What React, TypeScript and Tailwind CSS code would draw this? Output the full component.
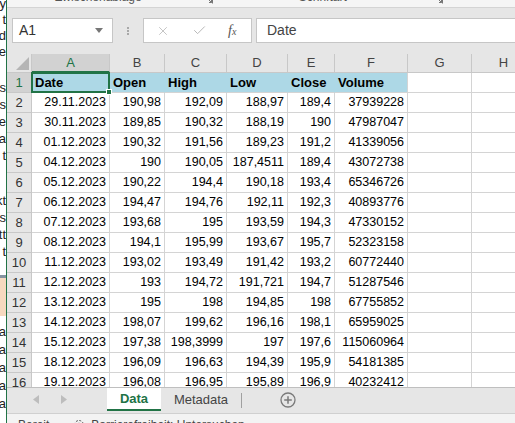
import { X, Check } from "lucide-react";

// Column letters and widths (incl. right gridline)
const COLS = [
  { key: "A", w: "w-[78px]" },
  { key: "B", w: "w-[55px]" },
  { key: "C", w: "w-[62px]" },
  { key: "D", w: "w-[61px]" },
  { key: "E", w: "w-[47px]" },
  { key: "F", w: "w-[73px]" },
  { key: "G", w: "w-[64px]" },
  { key: "H", w: "w-[64px]" },
];

const HEAD = ["Date", "Open", "High", "Low", "Close", "Volume"];

const ROWS = [
  ["29.11.2023", "190,98", "192,09", "188,97", "189,4", "37939228"],
  ["30.11.2023", "189,85", "190,32", "188,19", "190", "47987047"],
  ["01.12.2023", "190,32", "191,56", "189,23", "191,2", "41339056"],
  ["04.12.2023", "190", "190,05", "187,4511", "189,4", "43072738"],
  ["05.12.2023", "190,22", "194,4", "190,18", "193,4", "65346726"],
  ["06.12.2023", "194,47", "194,76", "192,11", "192,3", "40893776"],
  ["07.12.2023", "193,68", "195", "193,59", "194,3", "47330152"],
  ["08.12.2023", "194,1", "195,99", "193,67", "195,7", "52323158"],
  ["11.12.2023", "193,02", "193,49", "191,42", "193,2", "60772440"],
  ["12.12.2023", "193", "194,72", "191,721", "194,7", "51287546"],
  ["13.12.2023", "195", "198", "194,85", "198", "67755852"],
  ["14.12.2023", "198,07", "199,62", "196,16", "198,1", "65959025"],
  ["15.12.2023", "197,38", "198,3999", "197", "197,6", "115060964"],
  ["18.12.2023", "196,09", "196,63", "194,39", "195,9", "54181385"],
  ["19.12.2023", "196,08", "196,95", "195,89", "196,9", "40232412"],
];

// Fragments of the window behind, cut at the screen edge
const STRIP_A = ["y", "t", "d", "e"];
const STRIP_B = ["rs", "ls", "e", "a", "t"];
const STRIP_C = ["kt", "s", "tt", "t"];
const STRIP_D = ["a", "a", "a", "a", "a"];

function StripLine({ text, h }: { text: string; h: string }) {
  return (
    <div className={`flex ${h} items-center justify-end whitespace-nowrap`}>
      {text}
    </div>
  );
}

function LeftStrip() {
  return (
    <div className="flex h-full w-[6px] shrink-0 flex-col overflow-hidden bg-white text-[13px] text-[#222]">
      <div className="mt-[-4px]">
        {STRIP_A.map((t, i) => (
          <StripLine key={i} text={t} h="h-[16px]" />
        ))}
      </div>
      <div className="mt-[19px]">
        {STRIP_B.map((t, i) => (
          <StripLine key={i} text={t} h="h-[17px]" />
        ))}
      </div>
      <div className="mt-[28px]">
        {STRIP_C.map((t, i) => (
          <StripLine key={i} text={t} h="h-[17px]" />
        ))}
      </div>
      <div className="mt-[15px] h-[3px] shrink-0 bg-[#8593a0]" />
      <div className="h-[38px] shrink-0 bg-[#f6d9bf]" />
      <div className="mt-[7px]">
        {STRIP_D.map((t, i) => (
          <StripLine key={i} text={t} h="h-[18px]" />
        ))}
      </div>
    </div>
  );
}

function Launcher() {
  return (
    <svg width="8" height="8" viewBox="0 0 8 8" className="shrink-0">
      <path d="M0.5 0.5 H7.5 V7.5" fill="none" stroke="#777" strokeWidth="1" />
      <path d="M2 2 L6.5 6.5 M4 6.5 H6.5 V4" fill="none" stroke="#777" strokeWidth="1" />
    </svg>
  );
}

function RibbonStrip() {
  return (
    <div className="flex h-[8px] shrink-0 items-end overflow-hidden border-b border-[#d4d4d4] bg-[#f5f5f5] text-[12px] leading-[14px] text-[#555]">
      <div className="mb-[3px] ml-[48px] flex items-center whitespace-nowrap">Zwischenablage</div>
      <div className="mb-[3px] ml-[63px]">
        <Launcher />
      </div>
      <div className="mb-[3px] ml-[86px] whitespace-nowrap">Schriftart</div>
      <div className="mb-[3px] ml-[88px]">
        <Launcher />
      </div>
    </div>
  );
}

function FormulaBar() {
  return (
    <div className="flex h-[46px] shrink-0 items-start bg-[#e6e6e6] pt-[10px]">
      {/* Name box */}
      <div className="ml-[5px] flex h-[25px] w-[101px] shrink-0 items-center justify-between border border-[#c6c6c6] bg-white pl-[6px] pr-[9px] text-[14px] text-[#333]">
        <span>A1</span>
        <svg width="8" height="5" viewBox="0 0 8 5">
          <path d="M0 0 H8 L4 5 Z" fill="#777" />
        </svg>
      </div>
      {/* Grip dots */}
      <div className="ml-[14px] flex h-[25px] w-[2px] flex-col items-center justify-center gap-[1px]">
        <div className="h-[2px] w-[2px] bg-[#a8a8a8]" />
        <div className="h-[2px] w-[2px] bg-[#a8a8a8]" />
        <div className="h-[2px] w-[2px] bg-[#a8a8a8]" />
      </div>
      {/* Cancel / enter / fx */}
      <div className="ml-[14px] flex h-[25px] w-[109px] shrink-0 items-center border border-[#c6c6c6] bg-white">
        <X className="ml-[12px] h-[14px] w-[14px] text-[#b8b8b8]" strokeWidth={1.4} />
        <Check className="ml-[22px] h-[15px] w-[15px] text-[#b8b8b8]" strokeWidth={1.6} />
        <span
          className="ml-[21px] text-[14px] italic text-[#555]"
          style={{ fontFamily: '"Liberation Serif", serif' }}
        >
          f<span className="text-[10px]">x</span>
        </span>
      </div>
      {/* Formula input */}
      <div className="ml-[4px] flex h-[25px] w-[300px] shrink-0 items-center border border-[#c6c6c6] bg-white pl-[10px] text-[14px] text-[#444]">
        Date
      </div>
    </div>
  );
}

function HeaderRow() {
  return (
    <div className="flex h-[19px] shrink-0">
      <div className="flex h-full w-[25px] shrink-0 items-end justify-end border-r border-b border-[#c8c8c8] bg-[#e6e6e6] pb-[2px] pr-[2px]">
        <svg width="13" height="13" viewBox="0 0 13 13">
          <path d="M13 0 V13 H0 Z" fill="#b5b5b5" />
        </svg>
      </div>
      {COLS.map((c) => {
        const sel = c.key === "A";
        return (
          <div
            key={c.key}
            className={`flex h-full ${c.w} shrink-0 items-center justify-center border-r text-[13px] ${
              sel
                ? "border-b-2 border-r-[#c8c8c8] border-b-[#217346] bg-[#d2d2d2] text-[#217346]"
                : "border-b border-[#c8c8c8] bg-[#e6e6e6] text-[#444]"
            }`}
          >
            {c.key}
          </div>
        );
      })}
    </div>
  );
}

function RowHeader({ n }: { n: number }) {
  const sel = n === 1;
  return (
    <div
      className={`flex h-full w-[25px] shrink-0 items-center justify-center border-b border-r text-[13px] ${
        sel
          ? "border-b-[#c8c8c8] border-r-[#217346] bg-[#d2d2d2] text-[#217346]"
          : "border-[#c8c8c8] bg-[#e6e6e6] text-[#333]"
      }`}
    >
      {n}
    </div>
  );
}

function TitleRow() {
  return (
    <div className="flex h-[20px] shrink-0">
      <RowHeader n={1} />
      {COLS.map((c, i) => {
        if (i >= HEAD.length) {
          return (
            <div key={c.key} className={`h-full ${c.w} shrink-0 border-r border-b border-[#d4d4d4] bg-white`} />
          );
        }
        const last = i === HEAD.length - 1;
        return (
          <div
            key={c.key}
            className={`relative flex h-full ${c.w} shrink-0 items-center border-b border-r border-b-[#d4d4d4] bg-[#add8e6] pl-[3px] text-[13px] font-bold text-black ${
              last ? "border-r-[#d4d4d4]" : "border-r-[#add8e6]"
            }`}
          >
            {HEAD[i]}
            {i === 0 && (
              <div className="absolute -bottom-px -left-px -right-px -top-px z-10 border-2 border-[#217346]">
                <div className="absolute -bottom-[4px] -right-[4px] h-[6px] w-[6px] border border-white bg-[#217346]" />
              </div>
            )}
          </div>
        );
      })}
    </div>
  );
}

function DataRow({ n, cells }: { n: number; cells: string[] }) {
  return (
    <div className="flex h-[20px] shrink-0">
      <RowHeader n={n} />
      {COLS.map((c, i) => (
        <div
          key={c.key}
          className={`flex h-full ${c.w} shrink-0 items-center justify-end border-r border-b border-[#d4d4d4] bg-white pr-[3px] text-[12.5px] text-black`}
        >
          {cells[i] ?? ""}
        </div>
      ))}
    </div>
  );
}

function Grid() {
  return (
    <div className="flex h-[333px] shrink-0 flex-col overflow-hidden bg-white">
      <HeaderRow />
      <TitleRow />
      {ROWS.map((r, i) => (
        <DataRow key={i} n={i + 2} cells={r} />
      ))}
    </div>
  );
}

function TabBar() {
  return (
    <div className="flex h-[26px] shrink-0 items-start border-t border-[#bfbfbf] bg-[#e6e6e6]">
      <div className="flex h-[23px] w-[100px] shrink-0 items-center gap-[22px] pl-[26px]">
        <svg width="6" height="9" viewBox="0 0 6 9">
          <path d="M6 0 V9 L0 4.5 Z" fill="#bdbdbd" />
        </svg>
        <svg width="6" height="9" viewBox="0 0 6 9">
          <path d="M0 0 V9 L6 4.5 Z" fill="#bdbdbd" />
        </svg>
      </div>
      <div className="flex h-[23px] w-[54px] shrink-0 items-center justify-center border-b-2 border-[#217346] bg-white text-[13px] font-bold text-[#217346]">
        Data
      </div>
      <div className="flex h-[23px] w-[80px] shrink-0 items-center justify-center text-[13px] text-[#444]">
        Metadata
      </div>
      <div className="mt-[5px] h-[15px] w-px shrink-0 bg-[#a0a0a0]" />
      <div className="ml-[38px] flex h-[23px] items-center">
        <svg width="16" height="16" viewBox="0 0 16 16">
          <circle cx="8" cy="8" r="7" fill="none" stroke="#7a7a7a" strokeWidth="1.3" />
          <path d="M8 4.2 V11.8 M4.2 8 H11.8" stroke="#7a7a7a" strokeWidth="1.5" />
        </svg>
      </div>
    </div>
  );
}

function StatusBar() {
  return (
    <div className="flex h-[22px] shrink-0 items-start border-t border-[#d0d0d0] bg-[#f3f3f3] pt-[4px] text-[12px] leading-[14px] text-[#444]">
      <span className="ml-[11px]">Bereit</span>
      <svg width="12" height="12" viewBox="0 0 12 12" className="ml-[24px] mt-[1px]">
        <circle cx="6" cy="6" r="4.5" fill="none" stroke="#555" strokeWidth="1" strokeDasharray="2 1.5" />
        <circle cx="6" cy="6" r="1.8" fill="none" stroke="#555" strokeWidth="1" />
      </svg>
      <span className="ml-[6px] whitespace-nowrap">Barrierefreiheit: Untersuchen</span>
    </div>
  );
}

export default function App() {
  return (
    <div
      className="flex h-[423px] w-[515px] overflow-hidden bg-white"
      style={{ fontFamily: '"Liberation Sans", Arial, sans-serif' }}
    >
      <LeftStrip />
      <div className="h-full w-px shrink-0 bg-[#217346]" />
      <div className="flex min-w-0 flex-1 flex-col overflow-hidden">
        <RibbonStrip />
        <FormulaBar />
        <Grid />
        <TabBar />
        <StatusBar />
      </div>
    </div>
  );
}
